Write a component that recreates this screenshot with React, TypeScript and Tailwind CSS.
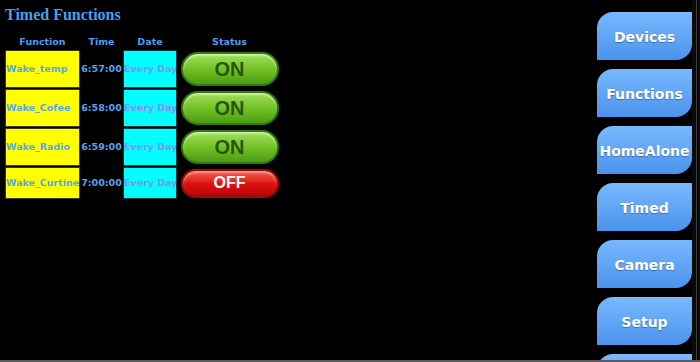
const rows = [
  { name: 'Wake_temp', time: '6:57:00', on: true },
  { name: 'Wake_Cofee', time: '6:58:00', on: true },
  { name: 'Wake_Radio', time: '6:59:00', on: true },
  { name: 'Wake_Curtine', time: '7:00:00', on: false },
];

// last one only peeks in at the bottom edge
const navItems = ['Devices', 'Functions', 'HomeAlone', 'Timed', 'Camera', 'Setup', ''];

const cellFont = { fontFamily: '"DejaVu Sans", Verdana, sans-serif' };

const App = () => {
  return (
    <div className="w-[700px] h-[362px] bg-black flex overflow-hidden relative">
      <div className="flex-1 pl-[5px] pt-[5px]">
        <h1
          className="text-[16px] font-bold text-[#4a9ef2] leading-[20px]"
          style={{ fontFamily: '"Liberation Serif", "Times New Roman", serif' }}
        >
          Timed Functions
        </h1>

        <div className="mt-[10px] text-[9.5px] font-bold" style={cellFont}>
          <div className="flex h-[14px] items-center text-[#4a9ef2]">
            <div className="w-[75px] text-center">Function</div>
            <div className="w-[43px] text-center">Time</div>
            <div className="w-[54px] text-center">Date</div>
            <div className="w-[101px] text-center ml-[2px]">Status</div>
          </div>

          <div className="flex flex-col gap-[1px] mt-[1px]">
            {rows.map((r, i) => (
              <div key={r.name} className={`flex items-center ${i === 3 ? 'h-[32px]' : 'h-[38px]'}`}>
                <div className="w-[75px] h-full bg-[#ffff00] border border-[#3a3a10] flex items-center text-[#56a4f2] whitespace-nowrap">
                  {r.name}
                </div>
                <div className="w-[43px] text-center text-[#56a4f2] whitespace-nowrap">{r.time}</div>
                <div className="w-[54px] h-full bg-[#00ffff] border border-[#0a3a3a] flex items-center text-[#8c8cf4] whitespace-nowrap overflow-hidden">
                  Every Day
                </div>
                <div className="w-[101px] ml-[2px] flex items-center justify-center">
                  {r.on ? (
                    <div
                      className="w-[98px] h-[34px] rounded-full border-[2px] border-[#2e7d0c] bg-gradient-to-b from-[#a2e05a] via-[#72c226] to-[#4d9c12] flex items-center justify-center text-[#2a560a] text-[20px] font-bold shadow-[inset_0_2px_2px_rgba(255,255,255,0.5)]"
                      style={{ fontFamily: '"Liberation Sans", Arial, sans-serif' }}
                    >
                      ON
                    </div>
                  ) : (
                    <div
                      className="w-[98px] h-[29px] rounded-full border-[2px] border-[#9a0a0a] bg-gradient-to-b from-[#f25a4a] via-[#e01010] to-[#b80606] flex items-center justify-center text-white text-[16px] font-bold shadow-[inset_0_2px_2px_rgba(255,255,255,0.4)]"
                      style={{ fontFamily: '"Liberation Sans", Arial, sans-serif' }}
                    >
                      OFF
                    </div>
                  )}
                </div>
              </div>
            ))}
          </div>
        </div>
      </div>

      <div className="w-[95px] flex flex-col gap-[9px] pt-[12px] shrink-0">
        {navItems.map((n, i) => (
          <div
            key={i}
            className="h-[48px] shrink-0 rounded-tl-[16px] rounded-br-[16px] bg-gradient-to-b from-[#78b8ff] to-[#4a93ec] flex items-center justify-center pt-[3px] text-white text-[14px] font-bold [text-shadow:0_1px_1px_rgba(0,0,0,0.3)]"
            style={cellFont}
          >
            {n}
          </div>
        ))}
      </div>

      <div className="w-[8px] shrink-0 bg-[#0a0a0a] flex justify-center">
        <div className="w-[1px] h-full bg-[#3a3a3a]" />
      </div>

      <div className="absolute left-0 right-0 bottom-0 h-[2px] bg-[#5a5a5a]" />
    </div>
  );
};

export default App;
